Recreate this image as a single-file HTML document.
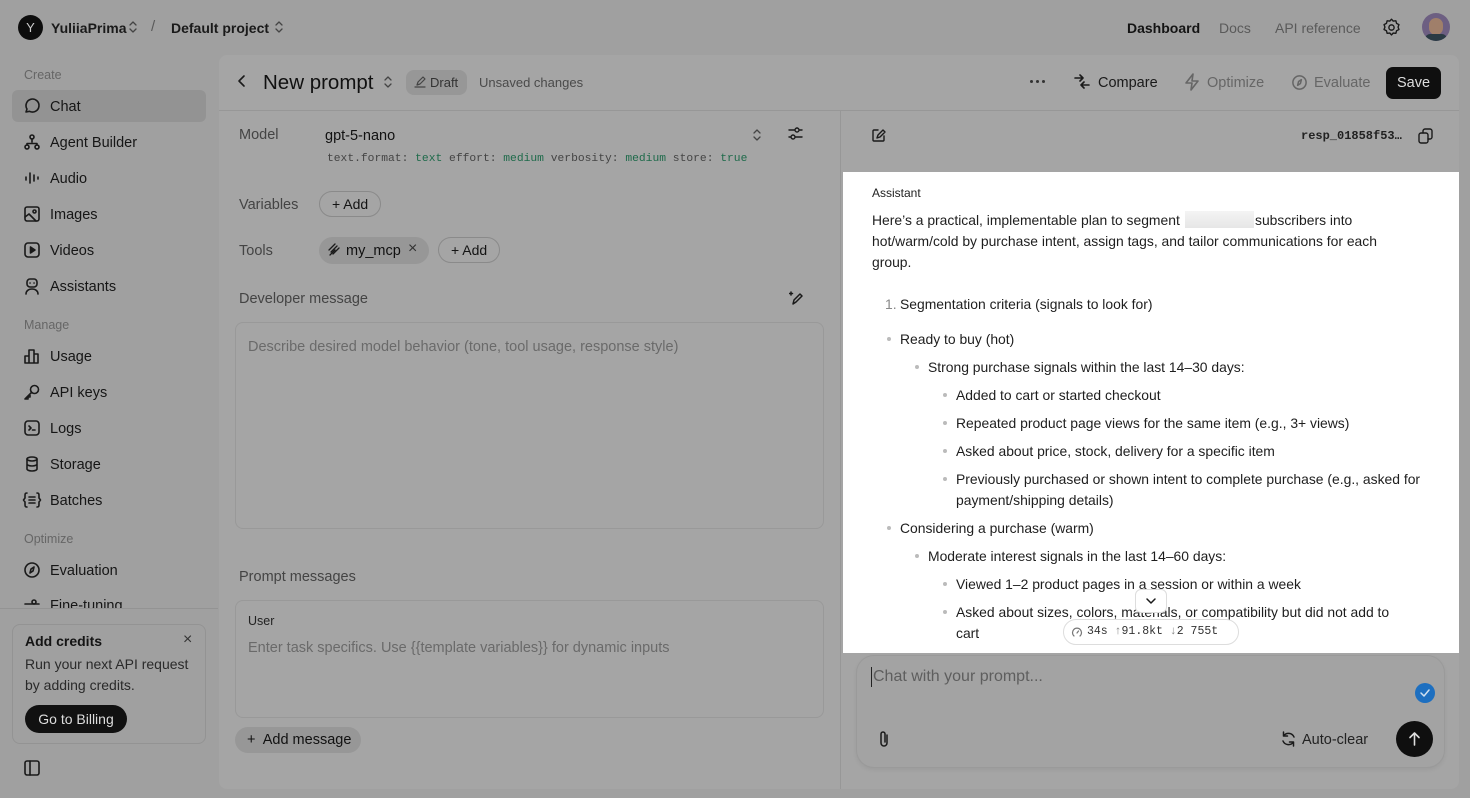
<!DOCTYPE html>
<html><head><meta charset="utf-8">
<style>
*{box-sizing:border-box;margin:0;padding:0}
html,body{background:#a0a0a0}
body{width:1470px;height:798px;overflow:hidden;font-family:"Liberation Sans",sans-serif;color:#141414;position:relative;font-size:14px}
.a{position:absolute;white-space:nowrap}
.mut{color:#5a5a5a}
.mono{font-family:"Liberation Mono",monospace}
svg{display:block}
.ico{position:absolute;stroke:#1a1a1a;fill:none;stroke-width:1.6;stroke-linecap:round;stroke-linejoin:round}
.side{font-size:14.5px;color:#161616}
.pill{position:absolute;border:1px solid #8a8a8a;border-radius:14px;height:26px;font-size:14px;line-height:24px;padding:0 12px}
.b{position:absolute;width:4px;height:4px;border-radius:2px;background:#bbb}
.t{position:absolute;font-size:13.9px;color:#1e1e1e;white-space:nowrap}
</style></head><body>

<!-- top bar -->
<div class="a" style="left:18px;top:15px;width:25px;height:25px;border-radius:50%;background:#0d0d0d;color:#ccc;font-size:13px;line-height:25px;text-align:center">Y</div>
<div class="a" style="left:51px;top:20px;font-size:14px;font-weight:bold;color:#1a1a1a">YuliiaPrima</div>
<svg class="ico" style="left:128px;top:20px;stroke:#444;stroke-width:1.3" width="10" height="14"><path d="M2 5l3-3 3 3M2 9l3 3 3-3"/></svg>
<div class="a mut" style="left:151px;top:18px;font-size:15px">/</div>
<div class="a" style="left:171px;top:20px;font-size:14px;font-weight:bold;color:#1a1a1a">Default project</div>
<svg class="ico" style="left:274px;top:20px;stroke:#444;stroke-width:1.3" width="10" height="14"><path d="M2 5l3-3 3 3M2 9l3 3 3-3"/></svg>
<div class="a" style="left:1127px;top:20px;font-size:14px;font-weight:bold">Dashboard</div>
<div class="a mut" style="left:1219px;top:20px;font-size:14px">Docs</div>
<div class="a mut" style="left:1275px;top:20px;font-size:14px">API reference</div>
<svg class="ico" style="left:1381px;top:17px" width="21" height="21" viewBox="0 0 24 24"><circle cx="12" cy="12" r="3"/><path d="M12 2.5l2 2.2 3-.3.8 2.9 2.7 1.4-1 2.8 1 2.8-2.7 1.4-.8 2.9-3-.3-2 2.2-2-2.2-3 .3-.8-2.9-2.7-1.4 1-2.8-1-2.8 2.7-1.4.8-2.9 3 .3z"/></svg>
<div class="a" style="left:1422px;top:13px;width:28px;height:28px;border-radius:50%;background:#6d5f82;overflow:hidden"><div style="position:absolute;left:7px;top:5px;width:14px;height:17px;border-radius:7px;background:#a07f6a"></div><div style="position:absolute;left:3px;top:21px;width:22px;height:10px;border-radius:6px;background:#2a3a44"></div></div>

<!-- sidebar -->
<div class="a" style="left:24px;top:68px;font-size:12.5px;color:#666">Create</div>
<div class="a" style="left:12px;top:90px;width:194px;height:32px;border-radius:6px;background:#939393"></div>
<svg class="ico" style="left:23px;top:97px" width="18" height="18" viewBox="0 0 18 18"><path d="M3 15l1-3a6.5 6.5 0 1 1 2.5 2.3z"/></svg>
<div class="a side" style="left:50px;top:99px">Chat</div>
<svg class="ico" style="left:23px;top:133px" width="18" height="18" viewBox="0 0 18 18"><circle cx="9" cy="4" r="2"/><circle cx="4" cy="14" r="2"/><circle cx="14" cy="14" r="2"/><path d="M9 6v3M4 12v-1.5h10V12"/></svg>
<div class="a side" style="left:50px;top:135px">Agent Builder</div>
<svg class="ico" style="left:23px;top:169px" width="18" height="18" viewBox="0 0 18 18"><path d="M3 8v3M7 4v10M11 6v6M15 8v2"/></svg>
<div class="a side" style="left:50px;top:171px">Audio</div>
<svg class="ico" style="left:23px;top:205px" width="18" height="18" viewBox="0 0 18 18"><rect x="2" y="2" width="14" height="14" rx="2"/><circle cx="11.5" cy="6.5" r="1.5"/><path d="M2 12l4-3 7 7"/></svg>
<div class="a side" style="left:50px;top:207px">Images</div>
<svg class="ico" style="left:23px;top:241px" width="18" height="18" viewBox="0 0 18 18"><rect x="2" y="2" width="14" height="14" rx="3"/><path d="M7.5 6v6l4.5-3z" fill="#1a1a1a"/></svg>
<div class="a side" style="left:50px;top:243px">Videos</div>
<svg class="ico" style="left:23px;top:277px" width="18" height="18" viewBox="0 0 18 18"><rect x="4" y="2" width="10" height="8" rx="3"/><path d="M7 6h.1M11 6h.1M3 17c0-3 2.5-5 6-5s6 2 6 5"/></svg>
<div class="a side" style="left:50px;top:279px">Assistants</div>
<div class="a" style="left:24px;top:318px;font-size:12.5px;color:#666">Manage</div>
<svg class="ico" style="left:23px;top:347px" width="18" height="18" viewBox="0 0 18 18"><path d="M2 16V9h4v7M6 16V3h5v13M11 16V7h4v9zM2 16h13"/></svg>
<div class="a side" style="left:50px;top:349px">Usage</div>
<svg class="ico" style="left:23px;top:383px" width="18" height="18" viewBox="0 0 18 18"><circle cx="11.5" cy="6.5" r="4"/><path d="M8.5 9.5L2 16h3v-2h2v-2"/></svg>
<div class="a side" style="left:50px;top:385px">API keys</div>
<svg class="ico" style="left:23px;top:419px" width="18" height="18" viewBox="0 0 18 18"><rect x="2" y="2" width="14" height="14" rx="3"/><path d="M6 7l2 2-2 2M9.5 11h2.5"/></svg>
<div class="a side" style="left:50px;top:421px">Logs</div>
<svg class="ico" style="left:23px;top:455px" width="18" height="18" viewBox="0 0 18 18"><ellipse cx="9" cy="4" rx="5" ry="2"/><path d="M4 4v10c0 1 2 2 5 2s5-1 5-2V4M4 9c0 1 2 2 5 2s5-1 5-2"/></svg>
<div class="a side" style="left:50px;top:457px">Storage</div>
<svg class="ico" style="left:22px;top:491px" width="20" height="18" viewBox="0 0 20 18"><path d="M5 2c-2 0-2 1-2 3v2l-1.5 2L3 11v2c0 2 0 3 2 3M15 2c2 0 2 1 2 3v2l1.5 2L17 11v2c0 2 0 3-2 3M7 6h6M7 9h6M7 12h6"/></svg>
<div class="a side" style="left:50px;top:493px">Batches</div>
<div class="a" style="left:24px;top:532px;font-size:12.5px;color:#666">Optimize</div>
<svg class="ico" style="left:23px;top:561px" width="18" height="18" viewBox="0 0 18 18"><circle cx="9" cy="9" r="7"/><path d="M11 6l-1 4-3 2 1-4z"/></svg>
<div class="a side" style="left:50px;top:563px">Evaluation</div>
<div class="a" style="left:0;top:596px;width:218px;height:12px;overflow:hidden"><div class="side" style="position:absolute;left:50px;top:2px">Fine-tuning</div><svg class="ico" style="position:absolute;left:23px;top:2px" width="18" height="18"><path d="M2 6h14"/><circle cx="11" cy="4" r="2"/></svg></div>
<div class="a" style="left:0;top:608px;width:218px;height:1px;background:#939393"></div>
<div class="a" style="left:12px;top:624px;width:194px;height:120px;border:1px solid #939393;border-radius:8px"></div>
<div class="a" style="left:25px;top:633px;font-size:14px;font-weight:bold">Add credits</div>
<div class="a" style="left:183px;top:631px;font-size:16px;color:#333">×</div>
<div class="a" style="left:25px;top:654px;font-size:14px;color:#2a2a2a;line-height:21px;white-space:normal;width:175px">Run your next API request by adding credits.</div>
<div class="a" style="left:25px;top:705px;width:102px;height:28px;border-radius:14px;background:#111;color:#ddd;font-size:14px;line-height:28px;text-align:center">Go to Billing</div>
<svg class="ico" style="left:24px;top:760px" width="16" height="16" viewBox="0 0 16 16"><rect x="1" y="1" width="14" height="14" rx="2"/><path d="M6 1v14"/></svg>

<!-- main panel -->
<div class="a" style="left:219px;top:55px;width:1240px;height:734px;background:#a5a5a5;border-radius:8px"></div>
<div class="a" style="left:219px;top:110px;width:1240px;height:1px;background:#979797"></div>
<div class="a" style="left:840px;top:111px;width:1px;height:678px;background:#979797"></div>
<svg class="ico" style="left:235px;top:74px;stroke-width:1.6" width="12" height="14"><path d="M9 2L4 7l5 5"/></svg>
<div class="a" style="left:263px;top:71px;font-size:20.5px;font-weight:500;color:#111">New prompt</div>
<svg class="ico" style="left:383px;top:75px;stroke:#444;stroke-width:1.3" width="10" height="14"><path d="M2 5l3-3 3 3M2 9l3 3 3-3"/></svg>
<div class="a" style="left:406px;top:70px;width:61px;height:25px;border-radius:8px;background:#979797"></div>
<svg class="ico" style="left:414px;top:76px;stroke:#444;stroke-width:1.2" width="12" height="12"><path d="M3 9l1-3 5-5 2 2-5 5zM1 11h10"/></svg>
<div class="a" style="left:430px;top:75px;font-size:13px;color:#333">Draft</div>
<div class="a" style="left:479px;top:75px;font-size:13px;color:#4a4a4a">Unsaved changes</div>
<div class="a" style="left:1030px;top:80px;width:16px;height:3px">
 <div style="position:absolute;left:0;top:0;width:3px;height:3px;border-radius:2px;background:#333"></div>
 <div style="position:absolute;left:6px;top:0;width:3px;height:3px;border-radius:2px;background:#333"></div>
 <div style="position:absolute;left:12px;top:0;width:3px;height:3px;border-radius:2px;background:#333"></div>
</div>
<svg class="ico" style="left:1073px;top:74px" width="18" height="16"><path d="M2 4h8M7 1l3 3-3 3M16 11H8M11 8l-3 3 3 3"/></svg>
<div class="a" style="left:1098px;top:75px;font-size:14.5px;color:#1a1a1a">Compare</div>
<svg class="ico" style="left:1184px;top:73px;stroke:#666" width="16" height="18"><path d="M9 1L2 10h6l-1 7 7-9H8z"/></svg>
<div class="a" style="left:1207px;top:75px;font-size:14.5px;color:#666">Optimize</div>
<svg class="ico" style="left:1291px;top:74px;stroke:#666" width="17" height="17" viewBox="0 0 18 18"><circle cx="9" cy="9" r="7"/><path d="M11 6l-1 4-3 2 1-4z"/></svg>
<div class="a" style="left:1314px;top:75px;font-size:14.5px;color:#666">Evaluate</div>
<div class="a" style="left:1386px;top:67px;width:55px;height:32px;border-radius:7px;background:#0f0f0f;color:#ddd;font-size:14.5px;line-height:32px;text-align:center">Save</div>

<!-- left pane -->
<div class="a" style="left:239px;top:127px;font-size:14.5px;color:#444">Model</div>
<div class="a" style="left:325px;top:128px;font-size:14.5px;color:#111">gpt-5-nano</div>
<svg class="ico" style="left:752px;top:128px;stroke:#444;stroke-width:1.3" width="10" height="14"><path d="M2 5l3-3 3 3M2 9l3 3 3-3"/></svg>
<svg class="ico" style="left:788px;top:126px;stroke-width:1.4" width="15" height="15"><path d="M1 4h13M1 11h13"/><circle cx="9" cy="4" r="2" fill="#a5a5a5"/><circle cx="5" cy="11" r="2" fill="#a5a5a5"/></svg>
<div class="a mono" style="left:327px;top:153px;font-size:11.3px;color:#444">text.format: <span style="color:#1e6a4a">text</span> effort: <span style="color:#1e6a4a">medium</span> verbosity: <span style="color:#1e6a4a">medium</span> store: <span style="color:#1e6a4a">true</span></div>
<div class="a" style="left:239px;top:197px;font-size:14.5px;color:#444">Variables</div>
<div class="pill" style="left:319px;top:191px">+ Add</div>
<div class="a" style="left:239px;top:243px;font-size:14.5px;color:#444">Tools</div>
<div class="a" style="left:319px;top:237px;width:110px;height:27px;border-radius:14px;background:#979797"></div>
<svg class="ico" style="left:327px;top:243px;stroke-width:1.3" width="14" height="15"><path d="M2 7l6-6M4 9l6-6M6 11l6-6M3 12l5-5"/></svg>
<div class="a" style="left:346px;top:243px;font-size:14.5px;color:#111">my_mcp</div>
<div class="a" style="left:408px;top:240px;font-size:16px;color:#333">×</div>
<div class="pill" style="left:438px;top:237px">+ Add</div>
<div class="a" style="left:239px;top:291px;font-size:14.5px;color:#444">Developer message</div>
<svg class="ico" style="left:789px;top:290px;stroke-width:1.5" width="16" height="16"><path d="M4 14l1-4 6-6 2 2-6 6zM2 2v3M0.5 3.5h3"/></svg>
<div class="a" style="left:235px;top:322px;width:589px;height:207px;border:1px solid #999;border-radius:8px"></div>
<div class="a" style="left:248px;top:339px;font-size:14.5px;color:#6a6a6a">Describe desired model behavior (tone, tool usage, response style)</div>
<div class="a" style="left:239px;top:569px;font-size:14.5px;color:#444">Prompt messages</div>
<div class="a" style="left:235px;top:600px;width:589px;height:118px;border:1px solid #999;border-radius:8px"></div>
<div class="a" style="left:248px;top:614px;font-size:12.5px;color:#222">User</div>
<div class="a" style="left:248px;top:640px;font-size:14.5px;color:#6a6a6a">Enter task specifics. Use {{template variables}} for dynamic inputs</div>
<div class="a" style="left:235px;top:727px;width:126px;height:26px;border-radius:13px;background:#979797;font-size:14.5px;line-height:26px;padding-left:12px;color:#111">+&nbsp; Add message</div>

<!-- right pane -->
<svg class="ico" style="left:871px;top:128px;stroke-width:1.4" width="15" height="15"><path d="M7 2H3a1 1 0 0 0-1 1v9a1 1 0 0 0 1 1h9a1 1 0 0 0 1-1V8M6 10l1-3 5-5 2 2-5 5z"/></svg>
<div class="a mono" style="left:1301px;top:129px;font-size:12px;color:#222;font-weight:bold">resp_01858f53…</div>
<svg class="ico" style="left:1418px;top:128px;stroke-width:1.4" width="16" height="16"><rect x="1" y="5" width="9" height="10" rx="2"/><path d="M5 5V3a2 2 0 0 1 2-2h5a2 2 0 0 1 2 2v6a2 2 0 0 1-2 2h-2"/></svg>

<div class="a" style="left:843px;top:172px;width:616px;height:481px;background:#fff"></div>
<div class="a" style="left:872px;top:186px;font-size:12px;color:#222">Assistant</div>
<div class="t" style="left:872px;top:212px">Here’s a practical, implementable plan to segment</div>
<div class="a" style="left:1185px;top:211px;width:69px;height:17px;background:linear-gradient(#f4f4f4,#e6e6e6)"></div>
<div class="t" style="left:1255px;top:212px">subscribers into</div>
<div class="t" style="left:872px;top:233px">hot/warm/cold by purchase intent, assign tags, and tailor communications for each</div>
<div class="t" style="left:872px;top:254px">group.</div>
<div class="t" style="left:885px;top:296px;color:#888">1.</div>
<div class="t" style="left:900px;top:296px">Segmentation criteria (signals to look for)</div>
<div class="b" style="left:887px;top:337px"></div><div class="t" style="left:900px;top:331px">Ready to buy (hot)</div>
<div class="b" style="left:915px;top:365px"></div><div class="t" style="left:928px;top:359px">Strong purchase signals within the last 14–30 days:</div>
<div class="b" style="left:943px;top:393px"></div><div class="t" style="left:956px;top:387px">Added to cart or started checkout</div>
<div class="b" style="left:943px;top:421px"></div><div class="t" style="left:956px;top:415px">Repeated product page views for the same item (e.g., 3+ views)</div>
<div class="b" style="left:943px;top:449px"></div><div class="t" style="left:956px;top:443px">Asked about price, stock, delivery for a specific item</div>
<div class="b" style="left:943px;top:477px"></div><div class="t" style="left:956px;top:471px">Previously purchased or shown intent to complete purchase (e.g., asked for</div>
<div class="t" style="left:956px;top:492px">payment/shipping details)</div>
<div class="b" style="left:887px;top:526px"></div><div class="t" style="left:900px;top:520px">Considering a purchase (warm)</div>
<div class="b" style="left:915px;top:554px"></div><div class="t" style="left:928px;top:548px">Moderate interest signals in the last 14–60 days:</div>
<div class="b" style="left:943px;top:582px"></div><div class="t" style="left:956px;top:576px">Viewed 1–2 product pages in a session or within a week</div>
<div class="b" style="left:943px;top:610px"></div><div class="t" style="left:956px;top:604px">Asked about sizes, colors, materials, or compatibility but did not add to</div>
<div class="t" style="left:956px;top:625px">cart</div>
<div class="a" style="left:1135px;top:589px;width:32px;height:24px;border:1px solid #ddd;border-radius:6px;background:#fff"></div>
<svg class="ico" style="left:1145px;top:596px;stroke-width:1.5" width="12" height="10"><path d="M2 3l4 4 4-4"/></svg>
<div class="a mono" style="left:1063px;top:619px;width:176px;height:26px;border:1px solid #ddd;border-radius:13px;background:#fff;font-size:11.5px;line-height:24px;color:#333"></div>
<svg class="ico" style="left:1071px;top:626px;stroke:#777;stroke-width:1.2" width="12" height="12"><path d="M3 10a4.5 4.5 0 1 1 6 0M6 7l1.5-2"/></svg>
<div class="a mono" style="left:1087px;top:625px;font-size:11.5px;color:#333">34s <span style="color:#888">↑</span>91.8kt <span style="color:#888">↓</span>2 755t</div>

<div class="a" style="left:856px;top:655px;width:589px;height:113px;border:1px solid #9a9a9a;border-radius:18px;background:#a3a3a3;box-shadow:0 2px 4px rgba(0,0,0,.06)"></div>
<div class="a" style="left:871px;top:667px;width:1px;height:20px;background:#222"></div>
<div class="a" style="left:873px;top:668px;font-size:16px;color:#5e5e5e">Chat with your prompt...</div>
<div class="a" style="left:1415px;top:683px;width:20px;height:20px;border-radius:50%;background:#1d6fc0"></div>
<svg class="ico" style="left:1419px;top:688px;stroke:#cfe0f0;stroke-width:1.5" width="12" height="10"><path d="M2 5l3 3 5-6"/></svg>
<svg class="ico" style="left:878px;top:730px;stroke-width:1.5" width="13" height="18"><path d="M9 5v8a3 3 0 0 1-6 0V4a2 2 0 0 1 4 0v8"/></svg>
<svg class="ico" style="left:1281px;top:731px;stroke-width:1.5" width="15" height="16"><path d="M13 6A6 6 0 0 0 2.5 5M2 10a6 6 0 0 0 10.5 1M2.5 1v4h4M12.5 15v-4h-4"/></svg>
<div class="a" style="left:1302px;top:732px;font-size:14.5px;color:#222">Auto-clear</div>
<div class="a" style="left:1396px;top:721px;width:37px;height:36px;border-radius:50%;background:#0f0f0f"></div>
<svg class="ico" style="left:1408px;top:731px;stroke:#ddd;stroke-width:1.6" width="13" height="15"><path d="M6.5 14V2M2 6.5l4.5-4.5 4.5 4.5"/></svg>
</body></html>
